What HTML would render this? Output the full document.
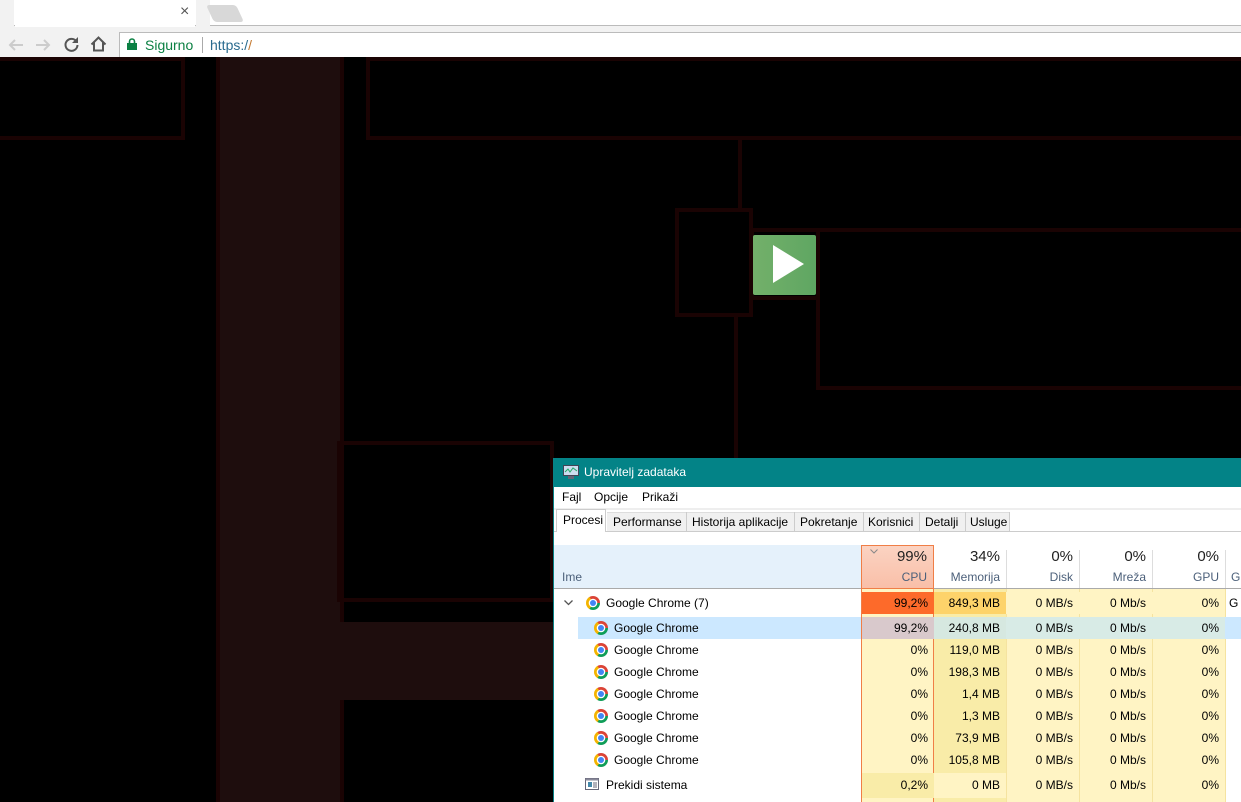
<!DOCTYPE html>
<html><head><meta charset="utf-8"><style>
*{margin:0;padding:0;box-sizing:border-box}
body{width:1241px;height:802px;overflow:hidden;background:#000;position:relative;font-family:"Liberation Sans",sans-serif}
.a{position:absolute}
.ln{position:absolute;border:4px solid #1a0303}
.tm{font-size:12px;color:#000}
.r{position:absolute;left:0;width:687px;height:22px;font-size:12px}
.r span{position:absolute;top:4px}
.c{position:absolute;top:0;height:22px;text-align:right;padding-right:6px;line-height:22px}
.ico{position:absolute;width:14px;height:14px;border-radius:50%;background:conic-gradient(from -30deg,#db4437 0 120deg,#0f9d58 120deg 240deg,#f4b400 240deg 360deg)}
.ico::after{content:"";position:absolute;left:4px;top:4px;width:6px;height:6px;border-radius:50%;background:#4285f4;box-shadow:0 0 0 1.3px #fff}
</style></head><body>
<div class="a" style="left:0;top:0;width:1241px;height:57px;background:#f2f2f2"></div>
<div class="a" style="left:0;top:0;width:1241px;height:26px;background:#fff;border-bottom:1px solid #bbb"></div>
<div class="a" style="left:0;top:0;width:14px;height:26px;background:#f2f2f2"></div>
<div class="a" style="left:196px;top:0;width:14px;height:26px;background:#f2f2f2"></div>
<div class="a" style="left:15px;top:0;width:180px;height:27px;background:#fff"></div>
<div class="a" style="left:180px;top:3px;font-size:16px;color:#555">×</div>
<div class="a" style="left:210px;top:5px;width:30px;height:17px;background:#d8d8d8;border-radius:3px;transform:skewX(25deg)"></div>
<svg class="a" style="left:7px;top:37px" width="18" height="16"><path d="M16 8H3M8 3L3 8l5 5" fill="none" stroke="#ccc" stroke-width="2"/></svg>
<svg class="a" style="left:34px;top:37px" width="18" height="16"><path d="M2 8h13M10 3l5 5-5 5" fill="none" stroke="#ccc" stroke-width="2"/></svg>
<svg class="a" style="left:63px;top:36px" width="17" height="17"><path d="M13.5 5.5A6 6 0 1 0 14.5 9" fill="none" stroke="#555" stroke-width="2"/><path d="M15 1v6H9z" fill="#555"/></svg>
<svg class="a" style="left:90px;top:36px" width="17" height="16"><path d="M1.5 8.5 L8.5 1.5 L15.5 8.5 M4 6.5 V14.5 H13 V6.5" fill="none" stroke="#555" stroke-width="2"/></svg>
<div class="a" style="left:119px;top:32px;width:1122px;height:25px;background:#fff;border:1px solid #bbb;border-right:none;border-bottom:none"></div>
<svg class="a" style="left:127px;top:38px" width="10" height="12"><rect x="0" y="5" width="10" height="7" fill="#0b8043"/><path d="M2.5 5.5V3.5a2.5 2.5 0 0 1 5 0v2" fill="none" stroke="#0b8043" stroke-width="1.6"/></svg>
<div class="a" style="left:145px;top:37px;font-size:14px;color:#0b8043">Sigurno</div>
<div class="a" style="left:202px;top:37px;width:1px;height:16px;background:#aaa"></div>
<div class="a" style="left:210px;top:37px;font-size:14px;color:#2a6b8f">https:/<span style="color:#c47a32">/</span></div>
<div class="ln" style="left:-4px;top:57px;width:189px;height:83px"></div>
<div class="a" style="left:216px;top:57px;width:128px;height:745px;background:#1e0d0d;border-left:4px solid #1a0303;border-right:4px solid #1a0303"></div>
<div class="ln" style="left:366px;top:57px;width:880px;height:83px"></div>
<div class="a" style="left:738px;top:139px;width:4px;height:70px;background:#1a0303"></div>
<div class="ln" style="left:675px;top:208px;width:78px;height:109px"></div>
<div class="a" style="left:734px;top:316px;width:4px;height:142px;background:#1a0303"></div>
<div class="ln" style="left:750px;top:228px;width:70px;height:72px"></div>
<div class="ln" style="left:816px;top:228px;width:430px;height:162px"></div>
<div class="a" style="left:753px;top:235px;width:63px;height:60px;background:linear-gradient(90deg,#73b06a,#5fa662);border-radius:2px"></div>
<div class="a" style="left:773px;top:245px;width:0;height:0;border-left:31px solid #fff;border-top:19px solid transparent;border-bottom:19px solid transparent"></div>
<div class="ln" style="left:337px;top:441px;width:217px;height:161px"></div>
<div class="a" style="left:340px;top:622px;width:214px;height:78px;background:#1e0d0d"></div>
<div class="a" style="left:553px;top:458px;width:688px;height:344px;background:#fff;border-left:1px solid #0a8286">
<div class="a" style="left:0;top:0;width:688px;height:29px;background:#038387"></div>
<svg class="a" style="left:9px;top:7px" width="16" height="14"><rect x="0.5" y="0.5" width="15" height="10" fill="#cde" stroke="#445"/><path d="M2 7 L5 4 L7 7 L10 3 L14 6" fill="none" stroke="#2a6" stroke-width="1"/><rect x="5" y="11" width="6" height="3" fill="#667"/></svg>
<div class="a" style="left:30px;top:7px;font-size:12px;color:#fff">Upravitelj zadataka</div>
<div class="a tm" style="left:8px;top:32px">Fajl</div>
<div class="a tm" style="left:40px;top:32px">Opcije</div>
<div class="a tm" style="left:88px;top:32px">Prikaži</div>
<div class="a" style="left:0;top:50px;width:688px;height:2px;background:#eee"></div>
<div class="a" style="left:0;top:73px;width:688px;height:1px;background:#ccc"></div>
<div class="a" style="left:2px;top:51px;width:50px;height:23px;background:#fff;border:1px solid #ccc;border-bottom:none"></div>
<div class="a tm" style="left:9px;top:55px">Procesi</div>
<div class="a" style="left:53px;top:54px;width:402px;height:19px;background:#f0f0f0;border-top:1px solid #ddd"></div>
<div class="a tm" style="left:59px;top:57px">Performanse</div>
<div class="a" style="left:132px;top:54px;width:1px;height:19px;background:#ccc"></div>
<div class="a tm" style="left:138px;top:57px">Historija aplikacije</div>
<div class="a" style="left:240px;top:54px;width:1px;height:19px;background:#ccc"></div>
<div class="a tm" style="left:246px;top:57px">Pokretanje</div>
<div class="a" style="left:309px;top:54px;width:1px;height:19px;background:#ccc"></div>
<div class="a tm" style="left:314px;top:57px">Korisnici</div>
<div class="a" style="left:365px;top:54px;width:1px;height:19px;background:#ccc"></div>
<div class="a tm" style="left:371px;top:57px">Detalji</div>
<div class="a" style="left:411px;top:54px;width:1px;height:19px;background:#ccc"></div>
<div class="a tm" style="left:416px;top:57px">Usluge</div>
<div class="a" style="left:455px;top:54px;width:1px;height:19px;background:#ccc"></div>
<div class="a" style="left:0;top:87px;width:307px;height:44px;background:#e5f1fb"></div>
<div class="a" style="left:0;top:130px;width:688px;height:1px;background:#aaa"></div>
<div class="a" style="left:8px;top:112px;font-size:12px;color:#4c607a">Ime</div>
<div class="a" style="left:307px;top:87px;width:73px;height:44px;background:linear-gradient(#fbd3c2,#f9bfa8);border:1px solid #f07e46"></div>
<svg class="a" style="left:316px;top:91px" width="8" height="5"><path d="M0.5 0.5L4 4 7.5 0.5" fill="none" stroke="#888"/></svg>
<div class="a" style="left:307px;top:90px;width:66px;text-align:right;font-size:15px;color:#222">99%</div>
<div class="a" style="left:307px;top:112px;width:66px;text-align:right;font-size:12px;color:#4c607a">CPU</div>
<div class="a" style="left:380px;top:90px;width:66px;text-align:right;font-size:15px;color:#222">34%</div>
<div class="a" style="left:380px;top:112px;width:66px;text-align:right;font-size:12px;color:#4c607a">Memorija</div>
<div class="a" style="left:452px;top:90px;width:67px;text-align:right;font-size:15px;color:#222">0%</div>
<div class="a" style="left:452px;top:112px;width:67px;text-align:right;font-size:12px;color:#4c607a">Disk</div>
<div class="a" style="left:525px;top:90px;width:67px;text-align:right;font-size:15px;color:#222">0%</div>
<div class="a" style="left:525px;top:112px;width:67px;text-align:right;font-size:12px;color:#4c607a">Mreža</div>
<div class="a" style="left:598px;top:90px;width:67px;text-align:right;font-size:15px;color:#222">0%</div>
<div class="a" style="left:598px;top:112px;width:67px;text-align:right;font-size:12px;color:#4c607a">GPU</div>
<div class="a" style="left:677px;top:112px;font-size:12px;color:#4c607a">G</div>
<div class="a" style="left:452px;top:92px;width:1px;height:38px;background:#ddd"></div>
<div class="a" style="left:525px;top:92px;width:1px;height:38px;background:#ddd"></div>
<div class="a" style="left:598px;top:92px;width:1px;height:38px;background:#ddd"></div>
<div class="a" style="left:671px;top:92px;width:1px;height:38px;background:#ddd"></div>
<div class="a" style="left:307px;top:131px;width:73px;height:213px;background:#fff4c4;border-left:1px solid #f07e46;border-right:1px solid #f07e46"></div>
<div class="a" style="left:380px;top:131px;width:72px;height:213px;background:#f9eca8"></div>
<div class="a" style="left:452px;top:131px;width:219px;height:213px;background:#fff4c4"></div>
<div class="a" style="left:452px;top:131px;width:1px;height:213px;background:#f5e3a0"></div>
<div class="a" style="left:525px;top:131px;width:1px;height:213px;background:#f5e3a0"></div>
<div class="a" style="left:598px;top:131px;width:1px;height:213px;background:#f5e3a0"></div>
<div class="a" style="left:671px;top:131px;width:1px;height:213px;background:#f5e3a0"></div>
<div class="r" style="top:134px">
<svg class="a" style="left:10px;top:8px" width="9" height="6"><path d="M0.5 0.5L4.5 4.5 8.5 0.5" fill="none" stroke="#555" stroke-width="1.3"/></svg>
<div class="ico" style="left:32px;top:4px"></div>
<span style="left:52px">Google Chrome (7)</span>
<div class="c" style="left:307px;width:73px;background:#fd6a2a;border-left:1px solid #f07e46">99,2%</div>
<div class="c" style="left:380px;width:72px;background:#fdd36a">849,3 MB</div>
<div class="c" style="left:452px;width:73px;background:#fff4c4">0 MB/s</div>
<div class="c" style="left:525px;width:73px;background:#fff4c4">0 Mb/s</div>
<div class="c" style="left:598px;width:73px;background:#fff4c4">0%</div>
<span style="left:675px">G</span>
</div>
<div class="a" style="left:24px;top:159px;width:664px;height:22px;background:#cce8ff"></div>
<div class="r" style="top:159px">
<div class="ico" style="left:40px;top:4px"></div>
<span style="left:60px">Google Chrome</span>
<div class="c" style="left:307px;width:73px;background:#d9c9cc;border-left:1px solid #f07e46">99,2%</div>
<div class="c" style="left:380px;width:72px;background:#d6e8e0">240,8 MB</div>
<div class="c" style="left:452px;width:73px;background:#d8ebe6">0 MB/s</div>
<div class="c" style="left:525px;width:73px;background:#d8ebe6">0 Mb/s</div>
<div class="c" style="left:598px;width:73px;background:#d8ebe6">0%</div>
</div>
<div class="r" style="top:181px"><div class="ico" style="left:40px;top:4px"></div><span style="left:60px">Google Chrome</span><div class="c" style="left:307px;width:73px">0%</div><div class="c" style="left:380px;width:72px">119,0 MB</div><div class="c" style="left:452px;width:73px">0 MB/s</div><div class="c" style="left:525px;width:73px">0 Mb/s</div><div class="c" style="left:598px;width:73px">0%</div></div>
<div class="r" style="top:203px"><div class="ico" style="left:40px;top:4px"></div><span style="left:60px">Google Chrome</span><div class="c" style="left:307px;width:73px">0%</div><div class="c" style="left:380px;width:72px">198,3 MB</div><div class="c" style="left:452px;width:73px">0 MB/s</div><div class="c" style="left:525px;width:73px">0 Mb/s</div><div class="c" style="left:598px;width:73px">0%</div></div>
<div class="r" style="top:225px"><div class="ico" style="left:40px;top:4px"></div><span style="left:60px">Google Chrome</span><div class="c" style="left:307px;width:73px">0%</div><div class="c" style="left:380px;width:72px">1,4 MB</div><div class="c" style="left:452px;width:73px">0 MB/s</div><div class="c" style="left:525px;width:73px">0 Mb/s</div><div class="c" style="left:598px;width:73px">0%</div></div>
<div class="r" style="top:247px"><div class="ico" style="left:40px;top:4px"></div><span style="left:60px">Google Chrome</span><div class="c" style="left:307px;width:73px">0%</div><div class="c" style="left:380px;width:72px">1,3 MB</div><div class="c" style="left:452px;width:73px">0 MB/s</div><div class="c" style="left:525px;width:73px">0 Mb/s</div><div class="c" style="left:598px;width:73px">0%</div></div>
<div class="r" style="top:269px"><div class="ico" style="left:40px;top:4px"></div><span style="left:60px">Google Chrome</span><div class="c" style="left:307px;width:73px">0%</div><div class="c" style="left:380px;width:72px">73,9 MB</div><div class="c" style="left:452px;width:73px">0 MB/s</div><div class="c" style="left:525px;width:73px">0 Mb/s</div><div class="c" style="left:598px;width:73px">0%</div></div>
<div class="r" style="top:291px"><div class="ico" style="left:40px;top:4px"></div><span style="left:60px">Google Chrome</span><div class="c" style="left:307px;width:73px">0%</div><div class="c" style="left:380px;width:72px">105,8 MB</div><div class="c" style="left:452px;width:73px">0 MB/s</div><div class="c" style="left:525px;width:73px">0 Mb/s</div><div class="c" style="left:598px;width:73px">0%</div></div>
<div class="r" style="top:315px;height:25px">
<svg class="a" style="left:31px;top:5px" width="14" height="12"><rect x="0.5" y="0.5" width="13" height="11" fill="#fff" stroke="#667"/><rect x="0.5" y="0.5" width="13" height="2" fill="#889"/><rect x="3" y="4" width="4" height="5" fill="#48a"/><path d="M8 5h4M8 7h4M8 9h4" stroke="#667"/></svg>
<span style="left:52px;top:5px">Prekidi sistema</span>
<div class="c" style="left:307px;width:73px;background:#f9eca8;border-left:1px solid #f07e46;height:25px;line-height:25px">0,2%</div>
<div class="c" style="left:380px;width:72px;background:#fff4c4;height:25px;line-height:25px">0 MB</div>
<div class="c" style="left:452px;width:73px;height:25px;line-height:25px">0 MB/s</div>
<div class="c" style="left:525px;width:73px;height:25px;line-height:25px">0 Mb/s</div>
<div class="c" style="left:598px;width:73px;height:25px;line-height:25px">0%</div>
</div>
</div>
</body></html>
